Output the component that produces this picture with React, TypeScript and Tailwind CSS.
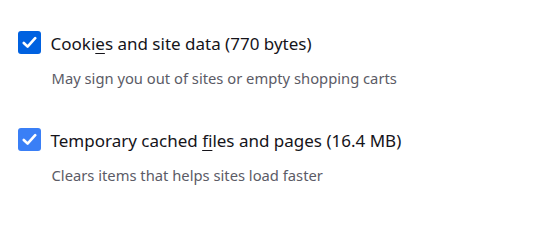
import React from 'react';

function Check({ tone }: { tone: 'dark' | 'light' }) {
  return (
    <span
      className={
        'flex h-[23px] w-[23px] shrink-0 items-center justify-center rounded-[3px] ' +
        (tone === 'dark' ? 'bg-[#0061e0]' : 'bg-[#3a7ff6]')
      }
    >
      <svg width="15" height="13" viewBox="0 0 15 13" fill="none">
        <path d="M1.8 7 L5.6 10.6 L13.2 2.2" stroke="white" strokeWidth="2.6" strokeLinecap="round" strokeLinejoin="round" />
      </svg>
    </span>
  );
}

function Option({
  tone,
  before,
  accel,
  after,
  hint,
}: {
  tone: 'dark' | 'light';
  before: string;
  accel: string;
  after: string;
  hint: string;
}) {
  return (
    <div>
      <label className="flex items-center gap-[10px]">
        <Check tone={tone} />
        <span className="pt-[3px] text-[17px] leading-[22px] text-[#15141a]">
          {before}
          <span className="underline underline-offset-[3px]">{accel}</span>
          {after}
        </span>
      </label>
      <div className="mt-[14px] pl-[34px] text-[14.75px] leading-[18px] text-[#5b5b66]">{hint}</div>
    </div>
  );
}

export default function App() {
  return (
    <div
      className="flex h-[211px] w-[538px] flex-col gap-[40px] bg-white pl-[17.5px] pt-[30px]"
      style={{ fontFamily: '"Noto Sans", "Open Sans", sans-serif' }}
    >
      <Option
        tone="dark"
        before="Cooki"
        accel="e"
        after="s and site data (770 bytes)"
        hint="May sign you out of sites or empty shopping carts"
      />
      <Option
        tone="light"
        before="Temporary cached "
        accel="f"
        after="iles and pages (16.4 MB)"
        hint="Clears items that helps sites load faster"
      />
    </div>
  );
}
